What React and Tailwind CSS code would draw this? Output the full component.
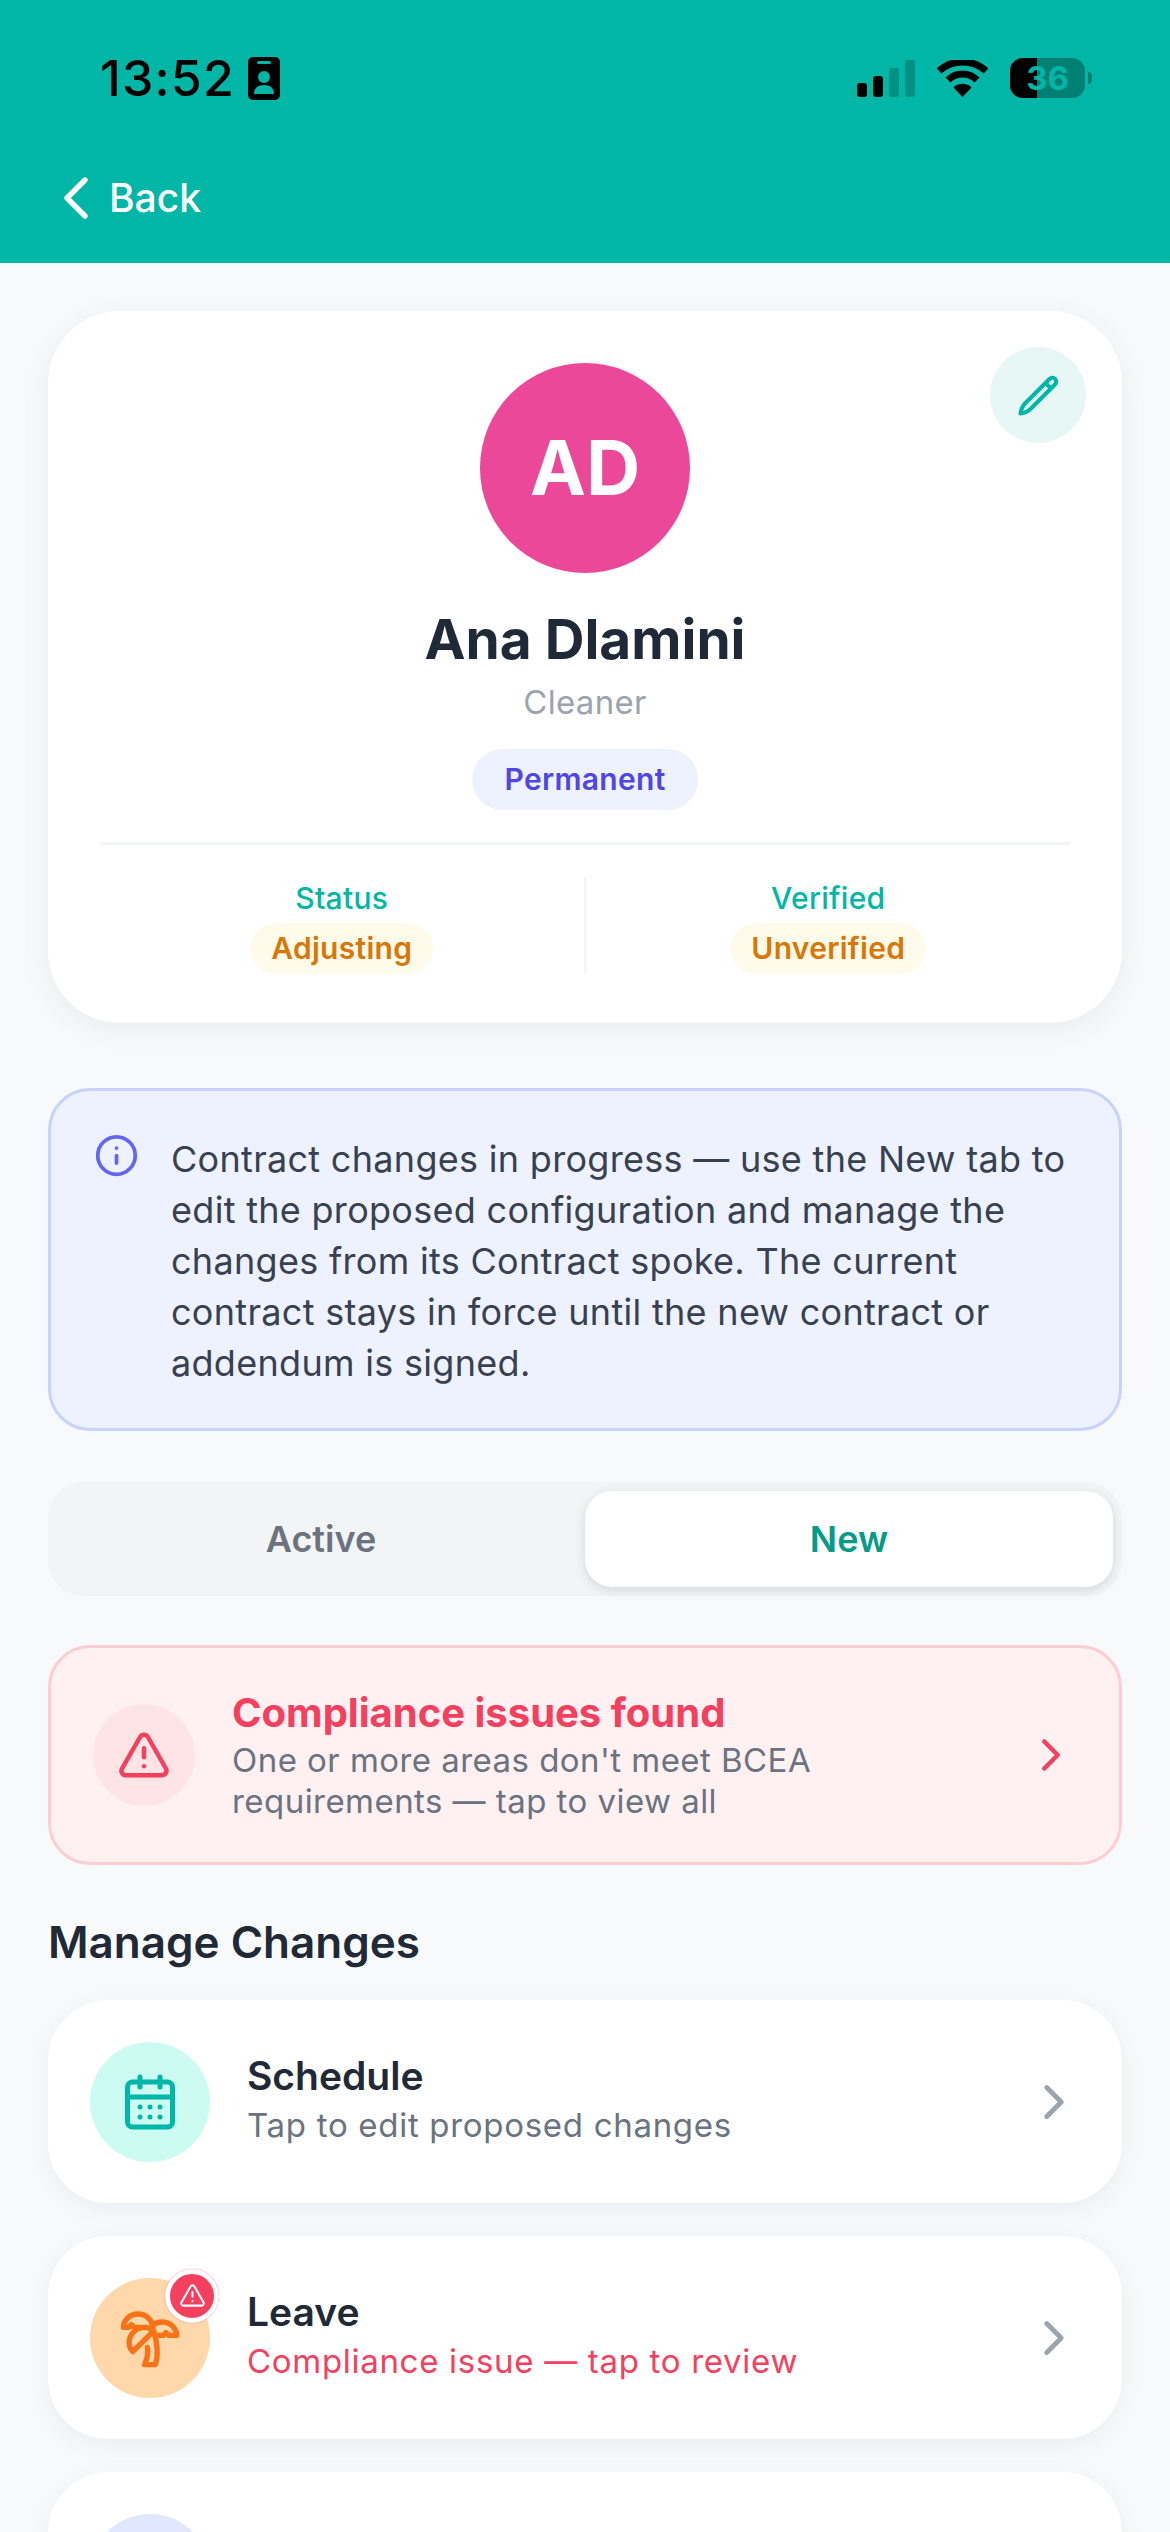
import React from "react";
import {
  CalendarDays,
  ChevronLeft,
  ChevronRight,
  Info,
  TreePalm,
  TriangleAlert,
} from "lucide-react";

const BatteryIcon = () => (
  <div className="relative ml-[22px] flex h-[40px] w-[75px] items-center justify-center overflow-hidden rounded-[13px] bg-[#008075]">
    <div className="absolute inset-y-0 left-0 w-[27px] bg-black" />
    <span className="relative text-[33px] leading-none font-bold text-[#00b6a6]">36</span>
  </div>
);

const SignalIcon = () => (
  <svg width="58" height="37" viewBox="0 0 58 37">
    <rect x="0" y="23" width="10" height="14" rx="3" fill="#000" />
    <rect x="16" y="16" width="10" height="21" rx="3" fill="#000" />
    <rect x="32" y="8" width="10" height="29" rx="3" fill="#009084" />
    <rect x="48" y="0" width="10" height="37" rx="3" fill="#009084" />
  </svg>
);

const WifiIcon = () => (
  <svg width="51" height="37" viewBox="0 0 51 37" fill="none">
    <path d="M2 11C15-1 36-1 49 11" stroke="#000" strokeWidth="7" />
    <path d="M11 20C19 12 32 12 40 20" stroke="#000" strokeWidth="7" />
    <path d="M16.5 27.5C21 22.500 30 22.500 34.500 27.500L25.500 37Z" fill="#000" />
  </svg>
);

const BadgeIcon = () => (
  <svg width="32" height="43" viewBox="0 0 32 43">
    <rect width="32" height="43" rx="5" fill="#000" />
    <rect x="9" y="4" width="14" height="3" rx="1.500" fill="#00b6a6" />
    <circle cx="16" cy="20" r="6" fill="#00b6a6" />
    <path d="M6 37c0-6 4-9 10-9s10 3 10 9z" fill="#00b6a6" />
  </svg>
);

const PencilIcon = () => (
  <svg width="41" height="41" viewBox="0 0 41 41" fill="none" stroke="#00b6a6" strokeWidth="4" strokeLinejoin="round">
    <path d="M31.500 4 7 28.500C5 30.500 3 35 2.500 38.500 6 38 10.500 36 12.500 34L37 9.500C40.500 5.500 35.500.5 31.500 4Z" />
    <path d="M27.500 8 33 13.500" />
  </svg>
);

const StatCol = ({ label, value }) => (
  <div className="flex flex-1 flex-col items-center">
    <p className="text-[30px] leading-[42px] font-medium tracking-[0.3px] text-[#00b6a6]">{label}</p>
    <span className="mt-[4px] rounded-full bg-[#fffbeb] px-[21px] py-[6px] text-[30px] leading-[39px] font-semibold tracking-[0.3px] text-[#d97706]">
      {value}
    </span>
  </div>
);

const SpokeCard = ({ icon, iconBg, title, subtitle, subtitleColor, badge }) => (
  <div className="flex h-[203px] items-center rounded-[60px] bg-white pr-[39px] pl-[42px] shadow-[0_6px_24px_rgba(17,24,39,0.05)]">
    <div className={`relative flex h-[120px] w-[120px] shrink-0 items-center justify-center rounded-full ${iconBg}`}>
      {icon}
      {badge && (
        <div className="absolute top-[-9px] right-[-9px] flex h-[54px] w-[54px] items-center justify-center rounded-full border-[5px] border-white bg-[#f43f5e] shadow-[0_0_1px_#f43f5e]">
          <TriangleAlert size={27} strokeWidth={1.800} color="#fff" />
        </div>
      )}
    </div>
    <div className="ml-[37px] flex-1 pb-[4px]">
      <p className="text-[39px] leading-[48px] font-semibold text-[#1f2937]">{title}</p>
      <p className={`mt-[2px] text-[33px] leading-[46px] tracking-[0.7px] ${subtitleColor}`}>{subtitle}</p>
    </div>
    <ChevronRight size={58} strokeWidth={2} color="#9ca3af" />
  </div>
);

export default function App() {
  return (
    <div className="h-[2532px] w-[1170px] overflow-hidden bg-[#f8f9fb] font-['Inter',sans-serif]">
      {/* header */}
      <header className="flex h-[263px] flex-col bg-[#00b6a6]">
        <div className="flex items-center pt-[56px] pl-[100px]">
          <span className="text-[50px] leading-[44px] font-medium tracking-[1.2px] text-black">13:52</span>
          <span className="ml-[13px]">
            <BadgeIcon />
          </span>
          <div className="ml-auto flex items-center pr-[78px]">
            <SignalIcon />
            <span className="ml-[22px]">
              <WifiIcon />
            </span>
            <BatteryIcon />
            <span className="ml-[3px] h-[12px] w-[4px] rounded-r-full bg-[#008075]" />
          </div>
        </div>
        <div className="mt-[62px] flex items-center pl-[40px] text-white">
          <ChevronLeft size={72} strokeWidth={1.800} />
          <span className="ml-[-3px] text-[39px] leading-[48px] font-medium">Back</span>
        </div>
      </header>

      <main className="px-[48px] pt-[48px]">
        {/* profile card */}
        <section className="relative flex h-[712px] flex-col items-center rounded-[72px] bg-white px-[52px] pt-[52px] shadow-[0_6px_30px_rgba(17,24,39,0.06)]">
          <button className="absolute top-[36px] right-[36px] flex h-[96px] w-[96px] items-center justify-center rounded-full bg-[#e6f7f5]">
            <PencilIcon />
          </button>
          <div className="flex h-[210px] w-[210px] items-center justify-center rounded-full bg-[#ec4899] text-[75px] font-bold text-white">
            AD
          </div>
          <h1 className="mt-[33px] text-[55px] leading-[66px] font-bold text-[#1f2937]">Ana Dlamini</h1>
          <p className="mt-[9px] text-[33px] leading-[42px] tracking-[0.3px] text-[#9ca3af]">Cleaner</p>
          <span className="mt-[26px] rounded-full bg-[#eef2ff] px-[32px] py-[11px] text-[30px] leading-[39px] font-semibold tracking-[0.3px] text-[#4f46e5]">
            Permanent
          </span>
          <div className="mt-[32px] h-[3px] w-full bg-[#f3f4f6]" />
          <div className="mt-[32px] flex h-[96px] w-full">
            <StatCol label="Status" value="Adjusting" />
            <div className="w-[3px] bg-[#f3f4f6]" />
            <StatCol label="Verified" value="Unverified" />
          </div>
        </section>

        {/* info box */}
        <section className="mt-[65px] flex h-[343px] rounded-[42px] border-[3px] border-[#c7d2fe] bg-[#eef2ff] pt-[43px] pr-[30px] pl-[43px]">
          <Info size={45} strokeWidth={2} color="#6366f1" className="mt-[-1px] shrink-0" />
          <p className="ml-[32px] text-[36px] leading-[51px] tracking-[0.3px] text-[#374151]">
            Contract changes in progress — use the New tab to edit the proposed configuration and manage the changes from its Contract spoke. The current contract stays in force until the new contract or addendum is signed.
          </p>
        </section>

        {/* tabs */}
        <div className="mt-[51px] flex h-[114px] rounded-[36px] bg-[#f3f4f6] p-[9px]">
          <button className="flex-1 text-[36px] font-semibold text-[#6b7280]">Active</button>
          <button className="flex-1 rounded-[27px] bg-white text-[36px] font-semibold text-[#059b87] shadow-[0_3px_12px_rgba(0,0,0,0.12)]">
            New
          </button>
        </div>

        {/* compliance */}
        <section className="mt-[49px] flex h-[220px] items-center rounded-[42px] border-[3px] border-[#fecdd3] bg-[#fff1f2] pr-[41px] pl-[42px]">
          <div className="flex h-[102px] w-[102px] shrink-0 items-center justify-center rounded-full bg-[#ffe4e6]">
            <TriangleAlert size={54} strokeWidth={2} color="#f43f5e" />
          </div>
          <div className="ml-[37px] flex-1">
            <p className="text-[40px] leading-[48px] font-bold text-[#f43f5e]">Compliance issues found</p>
            <p className="mt-[3px] text-[33px] leading-[41px] tracking-[0.45px] text-[#6b7280]">
              One or more areas don't meet BCEA
              <br />
              requirements — tap to view all
            </p>
          </div>
          <ChevronRight size={54} strokeWidth={2} color="#f43f5e" />
        </section>

        <h2 className="mt-[50px] text-[44px] leading-[54px] font-semibold text-[#1f2937]">Manage Changes</h2>

        <div className="mt-[31px] flex flex-col gap-[33px]">
          <SpokeCard
            icon={<CalendarDays size={60} strokeWidth={2} color="#00b6a6" />}
            iconBg="bg-[#ccfbf1]"
            title="Schedule"
            subtitle="Tap to edit proposed changes"
            subtitleColor="text-[#6b7280]"
          />
          <SpokeCard
            icon={<TreePalm size={64} strokeWidth={2} color="#f97316" />}
            iconBg="bg-[#fed7aa]"
            title="Leave"
            subtitle="Compliance issue — tap to review"
            subtitleColor="text-[#f43f5e]"
            badge
          />
          <SpokeCard
            icon={null}
            iconBg="bg-[#e0e7ff]"
            title=""
            subtitle=""
            subtitleColor="text-[#6b7280]"
          />
        </div>
      </main>
    </div>
  );
}
